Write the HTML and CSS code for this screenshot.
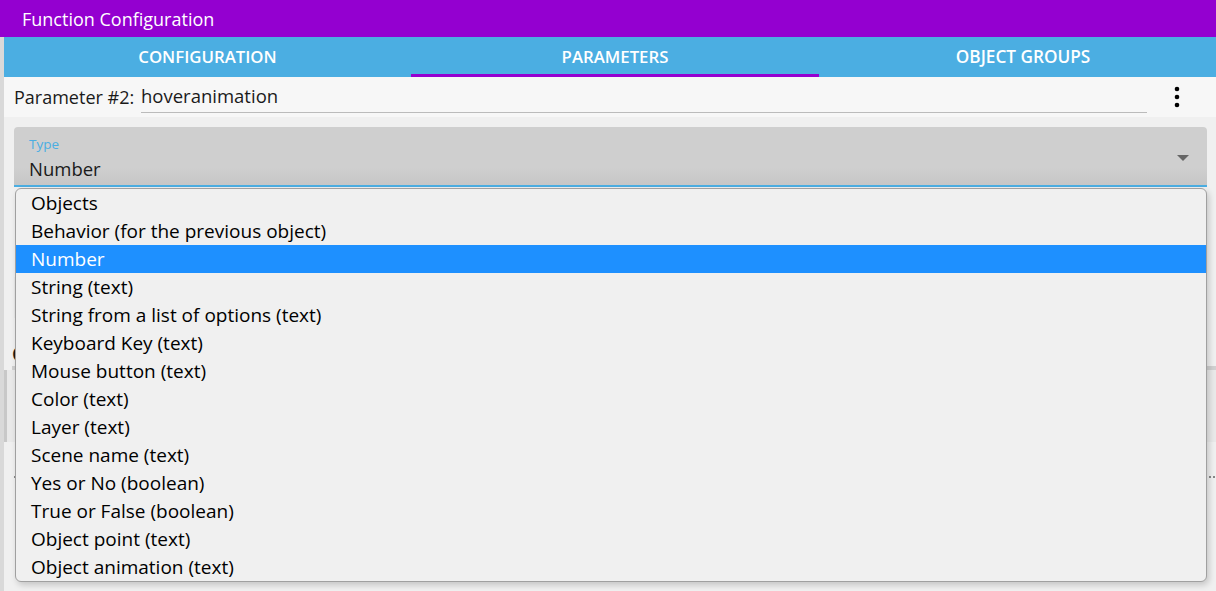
FILE: index.html
```html
<!DOCTYPE html>
<html>
<head>
	<meta charset="utf-8">
	<title>Function Configuration</title>
	<link rel="stylesheet" href="styles.css">
</head>
<body>
	<div class="title">Function Configuration</div>
	<div class="main">
		<ul class="tabs">
			<li>CONFIGURATION</li>
			<li class="current">PARAMETERS</li>
			<li>OBJECT GROUPS</li>
		</ul>
		<div class="param-row">
			<span class="param-label">Parameter #2:</span>
			<div class="param-input">hoveranimation</div>
			<svg class="kebab" width="24" height="24" viewBox="0 0 24 24"><circle cx="12" cy="4" r="2.3"/><circle cx="12" cy="12" r="2.3"/><circle cx="12" cy="20" r="2.3"/></svg>
		</div>
		<div class="content">
			<div class="select">
				<div class="select-label">Type</div>
				<div class="select-value">Number</div>
				<svg class="arrow" width="14" height="8" viewBox="0 0 14 8"><path d="M1 1h12l-6 6z"/></svg>
			</div>
			<div class="field"></div>
			<div class="heading">Configuration</div>
			<div class="panel"></div>
			<div class="dotted"></div>
		</div>
	</div>

	<ul class="menu">
		<li>Objects</li>
		<li>Behavior (for the previous object)</li>
		<li class="selected">Number</li>
		<li>String (text)</li>
		<li>String from a list of options (text)</li>
		<li>Keyboard Key (text)</li>
		<li>Mouse button (text)</li>
		<li>Color (text)</li>
		<li>Layer (text)</li>
		<li>Scene name (text)</li>
		<li>Yes or No (boolean)</li>
		<li>True or False (boolean)</li>
		<li>Object point (text)</li>
		<li>Object animation (text)</li>
	</ul>
</body>
</html>
```

FILE: styles.css
```css
*{
    margin: 0;
    padding: 0;
    box-sizing: border-box;
}
html,body{
    height: 100%;
    overflow: hidden;
}
body{
    background: #d9d9d9;
    font-family: "Open Sans", "Noto Sans", sans-serif;
    color: #1a1a1a;
}
.title{
    height: 37px;
    background: #9400d0;
    color: #fff;
    font-size: 18px;
    line-height: 38px;
    padding-left: 22px;
}
.main{
    margin-left: 4px;
    width: 1224px;
}
ul.tabs{
    display: flex;
    height: 40px;
    background: #4baee2;
    list-style: none;
}
ul.tabs li{
    width: 408px;
    color: #fff;
    font-weight: 600;
    font-size: 16.8px;
    text-align: center;
    line-height: 40px;
}
ul.tabs li:first-child{
    width: 407px;
}
ul.tabs li:last-child{
    font-size: 17.2px;
}
ul.tabs .current{
    box-shadow: inset 0 -3px 0 #9400d0;
}
.param-row{
    display: flex;
    align-items: center;
    height: 40px;
    background: #f7f7f7;
    padding-left: 10px;
    font-size: 18.5px;
}
.param-label{
    width: 127px;
    font-size: 18px;
}
.param-input{
    width: 1006px;
    height: 31px;
    line-height: 28px;
    border-bottom: 1px solid #bbb;
}
.kebab{
    margin-left: 18px;
    fill: #000;
}
.content{
    background: #f0f0f0;
    height: 480px;
    padding: 10px 0 0 10px;
}
.select{
    position: relative;
    width: 1193px;
    height: 60px;
    background: linear-gradient(#cfcfcf 70%, #c6c6c6);
    border-radius: 4px 4px 0 0;
    border-bottom: 2px solid #4baee2;
    padding: 8px 0 0 15px;
}
.select-label{
    color: #4baee2;
    font-size: 13.5px;
    line-height: 18px;
}
.select-value{
    font-size: 18.5px;
    line-height: 30px;
    margin-top: 1px;
}
.select .arrow{
    position: absolute;
    right: 17px;
    top: 27px;
    fill: #666;
}
.field{
    margin-top: 90px;
    width: 1193px;
    height: 41px;
    border-right: 2px solid #4baee2;
    background: #e9e9e9;
}
.heading{
    margin: 24px 0 0 -2px;
    font-size: 19px;
    font-weight: 600;
    line-height: 24px;
    border-bottom: 4px solid #d0d0d0;
}
.panel{
    margin: 0 0 0 -10px;
    width: 1212px;
    height: 72px;
    background: #e9e9e9;
    border-left: 3px solid #c8c8c8;
}
.dotted{
    margin-top: 34px;
    width: 1212px;
    border-top: 2px dotted #888;
}
ul.menu{
    position: absolute;
    top: 188px;
    left: 15px;
    width: 1192px;
    height: 394px;
    list-style: none;
    background: #f0f0f0;
    border: 1px solid #a0a0a0;
    border-radius: 6px;
    box-shadow: 2px 3px 6px rgba(0,0,0,0.18);
    font-size: 19px;
    overflow: hidden;
}
ul.menu li{
    height: 28px;
    line-height: 28px;
    padding-left: 15px;
    color: #000;
}
ul.menu .selected{
    background: #1e90ff;
    color: #fff;
}
```
